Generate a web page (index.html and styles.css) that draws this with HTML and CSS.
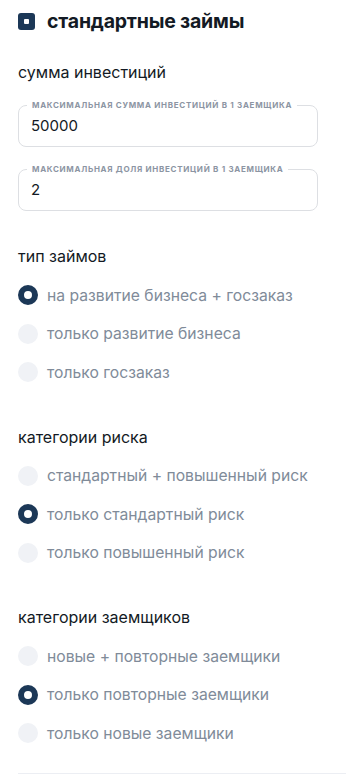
FILE: index.html
```html
<!DOCTYPE html>
<html lang="ru">
<head>
    <meta charset="UTF-8">
    <meta name="viewport" content="width=device-width, initial-scale=1.0">
    <title>Стандартные займы</title>
    <link rel="stylesheet" href="styles.css">
</head>
<body>
    <div class="panel">
        <div class="panel-header">
            <span class="checkbox checked"></span>
            <h2 class="panel-title">стандартные займы</h2>
        </div>

        <!-- сумма инвестиций -->
        <div class="group first">
            <h3 class="group-title">сумма инвестиций</h3>
            <fieldset class="field">
                <legend class="field-label">максимальная сумма инвестиций в 1 заемщика</legend>
                <input class="field-input" type="text" value="50000">
            </fieldset>
            <fieldset class="field">
                <legend class="field-label">максимальная доля инвестиций в 1 заемщика</legend>
                <input class="field-input" type="text" value="2">
            </fieldset>
        </div>

        <div class="group">
            <h3 class="group-title">тип займов</h3>
            <div class="radio-list">
                <label class="radio"><span class="radio-dot checked"></span>на развитие бизнеса + госзаказ</label>
                <label class="radio"><span class="radio-dot"></span>только развитие бизнеса</label>
                <label class="radio"><span class="radio-dot"></span>только госзаказ</label>
            </div>
        </div>

        <div class="group">
            <h3 class="group-title">категории риска</h3>
            <div class="radio-list">
                <label class="radio"><span class="radio-dot"></span>стандартный + повышенный риск</label>
                <label class="radio"><span class="radio-dot checked"></span>только стандартный риск</label>
                <label class="radio"><span class="radio-dot"></span>только повышенный риск</label>
            </div>
        </div>

        <div class="group">
            <h3 class="group-title">категории заемщиков</h3>
            <div class="radio-list">
                <label class="radio"><span class="radio-dot"></span>новые + повторные заемщики</label>
                <label class="radio"><span class="radio-dot checked"></span>только повторные заемщики</label>
                <label class="radio"><span class="radio-dot"></span>только новые заемщики</label>
            </div>
        </div>

        <div class="divider"></div>
    </div>
</body>
</html>
```

FILE: styles.css
```css
* {
    box-sizing: border-box;
}

body {
    margin: 0;
    background: white;
    font-family: Inter, "Noto Sans", sans-serif;
    color: #131a24;
}

.panel {
    padding: 7px 0 0 18px;
}

.panel-header {
    display: flex;
    align-items: center;
    gap: 12px;
    height: 28px;
}

.checkbox {
    width: 17px;
    height: 17px;
    border-radius: 3px;
    background: #1c3857;
    display: flex;
    align-items: center;
    justify-content: center;
}

.checkbox.checked::after {
    content: "";
    width: 5px;
    height: 5px;
    border-radius: 1px;
    background: white;
}

.panel-title {
    margin: 0;
    font-size: 19.5px;
    font-weight: 700;
    line-height: 28px;
    letter-spacing: -0.2px;
}

.group {
    margin-top: 35px;
    max-width: 300px;
}

.group.first {
    margin-top: 27px;
}

.group-title {
    margin: 0 0 18px;
    font-size: 16px;
    font-weight: 400;
    line-height: 20px;
}

.field {
    margin: 0 0 17px;
    padding: 0 8px 6px;
    border: 1px solid #dddfe3;
    border-radius: 8px;
    min-width: 0;
}

.field:last-child {
    margin-bottom: 0;
}

.field-label {
    padding: 0 5px;
    font-size: 8px;
    line-height: 10px;
    font-weight: 700;
    text-transform: uppercase;
    letter-spacing: 0.7px;
    color: #8c95a3;
}

.field-input {
    display: block;
    width: 100%;
    height: 30px;
    padding: 0 4px;
    border: none;
    outline: none;
    font-family: inherit;
    font-size: 15px;
    color: #131a24;
    background: transparent;
}

.radio-list {
    display: flex;
    flex-direction: column;
    margin-top: -8px;
}

.radio {
    display: flex;
    align-items: center;
    gap: 9px;
    height: 38.5px;
    font-size: 15.7px;
    color: #808b99;
    cursor: pointer;
}

.radio-dot {
    width: 20px;
    height: 20px;
    border-radius: 50%;
    background: #f0f2f6;
    flex-shrink: 0;
}

.radio-dot.checked {
    background: white;
    border: 6px solid #1c3857;
}

.divider {
    margin-top: 20px;
    height: 1px;
    background: #eceef3;
}
```
